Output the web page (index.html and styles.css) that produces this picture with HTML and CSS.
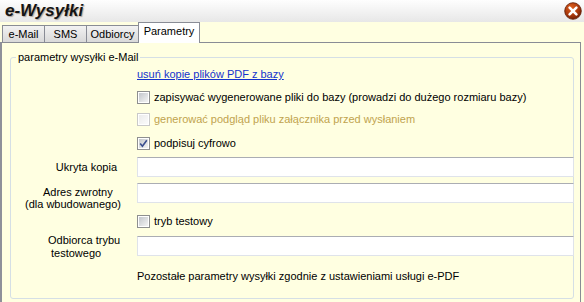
FILE: index.html
```html
<!DOCTYPE html>
<html lang="pl">
<head>
<meta charset="utf-8">
<title>e-Wysyłki</title>
<link rel="stylesheet" href="styles.css">
</head>
<body>
<div class="window">
  <div class="titlebar">
    <h1 class="title">e-Wysyłki</h1>
    <span class="close" aria-label="Zamknij">
      <svg width="18" height="18" viewBox="0 0 18 18">
        <defs>
          <radialGradient id="cg" cx="0.4" cy="0.3" r="0.75">
            <stop offset="0" stop-color="#e0601e"/>
            <stop offset="0.6" stop-color="#a8380c"/>
            <stop offset="1" stop-color="#6e1e04"/>
          </radialGradient>
        </defs>
        <circle cx="9" cy="9" r="8.3" fill="url(#cg)" stroke="#5e1a04" stroke-width="0.8"/>
        <path d="M5.6 5.6 L12.4 12.4 M12.4 5.6 L5.6 12.4" stroke="#ffffff" stroke-width="2.6" stroke-linecap="round"/>
      </svg>
    </span>
  </div>
  <div class="tabs">
    <span class="tab tab-mail">e-Mail</span>
    <span class="tab tab-sms">SMS</span>
    <span class="tab tab-odb">Odbiorcy</span>
    <span class="tab tab-active">Parametry</span>
  </div>
  <div class="panel">
    <fieldset class="group">
      <legend class="legend">parametry wysyłki e-Mail</legend>
      <div class="row row-link"><span></span><a class="link" href="#">usuń kopie plików PDF z bazy</a></div>
      <div class="row row-cb1"><span></span><label class="check"><span class="cb"></span>zapisywać wygenerowane pliki do bazy (prowadzi do dużego rozmiaru bazy)</label></div>
      <div class="row row-cb2"><span></span><label class="check disabled"><span class="cb cb-disabled"></span>generować podgląd pliku załącznika przed wysłaniem</label></div>
      <div class="row row-cb3"><span></span><label class="check"><span class="cb cb-checked"><svg width="9" height="9" viewBox="0 0 9 9"><path d="M1.2 4.6 L3.4 7.2 L7.8 1.2" fill="none" stroke="#3a4d8e" stroke-width="1.6"/></svg></span>podpisuj cyfrowo</label></div>
      <div class="row row-input row-in1"><span class="lbl lbl-right">Ukryta kopia</span><span class="input"></span></div>
      <div class="row row-input row-in2"><span class="lbl lbl-multi lbl-adres"><span class="l1">Adres zwrotny</span><span class="l2">(dla wbudowanego)</span></span><span class="input"></span></div>
      <div class="row row-cb4"><span></span><label class="check"><span class="cb"></span>tryb testowy</label></div>
      <div class="row row-input row-in3"><span class="lbl lbl-multi lbl-odb"><span class="l1">Odbiorca trybu</span><span class="l2">testowego</span></span><span class="input"></span></div>
      <div class="row row-note"><span></span><span class="note">Pozostałe parametry wysyłki zgodnie z ustawieniami usługi e-PDF</span></div>
    </fieldset>
  </div>
</div>
</body>
</html>
```

FILE: styles.css
```css
* { box-sizing: border-box; }

html, body {
  margin: 0;
  padding: 0;
}

body {
  width: 584px;
  height: 302px;
  overflow: hidden;
  background: #ffffe1;
  font-family: "Liberation Sans", Arial, sans-serif;
  font-size: 11px;
  color: #000;
}

.window {
  display: flex;
  flex-direction: column;
}

.titlebar {
  height: 22px;
  display: flex;
  align-items: center;
  padding: 0 2px 0 5px;
  background: linear-gradient(#fefefe, #e7e7e7);
}

.title {
  margin: 0;
  font-size: 17px;
  font-weight: bold;
  font-style: italic;
  color: #141414;
  line-height: 22px;
  text-shadow: 1px 1px 1px rgba(60, 30, 0, 0.35);
}

.close {
  margin-left: auto;
  width: 18px;
  height: 18px;
  display: flex;
}

.tabs {
  height: 20px;
  display: flex;
  align-items: flex-end;
  padding-left: 2px;
}

.tab {
  height: 17px;
  display: flex;
  align-items: center;
  justify-content: center;
  border: 1px solid #898c95;
  border-bottom: none;
  border-right: none;
  background: linear-gradient(#f2f2f2, #d9d9d9);
  padding-bottom: 1px;
}

.tab-mail { width: 42px; }
.tab-sms { width: 42px; }
.tab-odb { width: 52px; }

.tab-active {
  width: 62px;
  height: 21px;
  margin-bottom: -1px;
  border-right: 1px solid #898c95;
  background: #ffffff;
  position: relative;
  z-index: 1;
  padding-bottom: 4px;
}

.panel {
  width: 581px;
  height: 270px;
  border: 1px solid #898c95;
  border-left: 2px solid #8e9099;
  background: #ffffe1;
  padding: 7px 0 0 8px;
}

.group {
  width: 564px;
  margin: 0;
  padding: 0 0 13px 0;
  border: 1px solid #d5dfe5;
  border-radius: 3px;
  min-width: 0;
}

.legend {
  margin-left: 5px;
  padding: 0 2px;
  line-height: 14px;
}

.row {
  display: grid;
  grid-template-columns: 126px 1fr;
  grid-template-rows: 18px;
  align-items: center;
  height: 18px;
}

.row-link { margin-top: 1px; }
.row-cb1 { margin-top: 5px; }
.row-cb2 { margin-top: 4px; }
.row-cb3 { margin-top: 6px; }
.row-in1 { margin-top: 5px; }
.row-in2 { margin-top: 6px; }
.row-cb4 { margin-top: 9px; }
.row-in3 { margin-top: 6px; }
.row-note { margin-top: 11px; }

.row-input {
  height: 20px;
  grid-template-rows: 20px;
}

.link {
  color: #1533cc;
  text-decoration: underline;
  justify-self: start;
}

.check {
  display: flex;
  align-items: center;
  gap: 4px;
  white-space: nowrap;
}

.disabled {
  color: #bfa34e;
}

.cb {
  width: 13px;
  height: 13px;
  border: 1px solid #8e8f8f;
  padding: 1px;
  background: linear-gradient(135deg, #c3c6cb, #f4f4f4) content-box, #ffffff;
  display: flex;
  align-items: center;
  justify-content: center;
  flex: none;
}

.cb-disabled {
  border-color: #c9c9c9;
  background: linear-gradient(135deg, #ebebeb, #fbfbfb) content-box, #ffffff;
}

.cb-checked svg {
  display: block;
}

.input {
  height: 20px;
  margin-right: -1px;
  background: #ffffff;
  border: 1px solid #dfe3ea;
  border-top-color: #abadb3;
}

.lbl {
  white-space: nowrap;
}

.lbl-right {
  text-align: right;
  padding-right: 20px;
}

.lbl-multi {
  display: flex;
  flex-direction: column;
  align-self: start;
}

.lbl-adres {
  margin-top: 3px;
  line-height: 12px;
}

.lbl-adres .l1 { padding-left: 32px; }
.lbl-adres .l2 { padding-left: 14px; }

.lbl-odb {
  margin-top: -2px;
  line-height: 13px;
}

.lbl-odb .l1 { padding-left: 37px; }
.lbl-odb .l2 { padding-left: 40px; }

.note {
  white-space: nowrap;
}
```
